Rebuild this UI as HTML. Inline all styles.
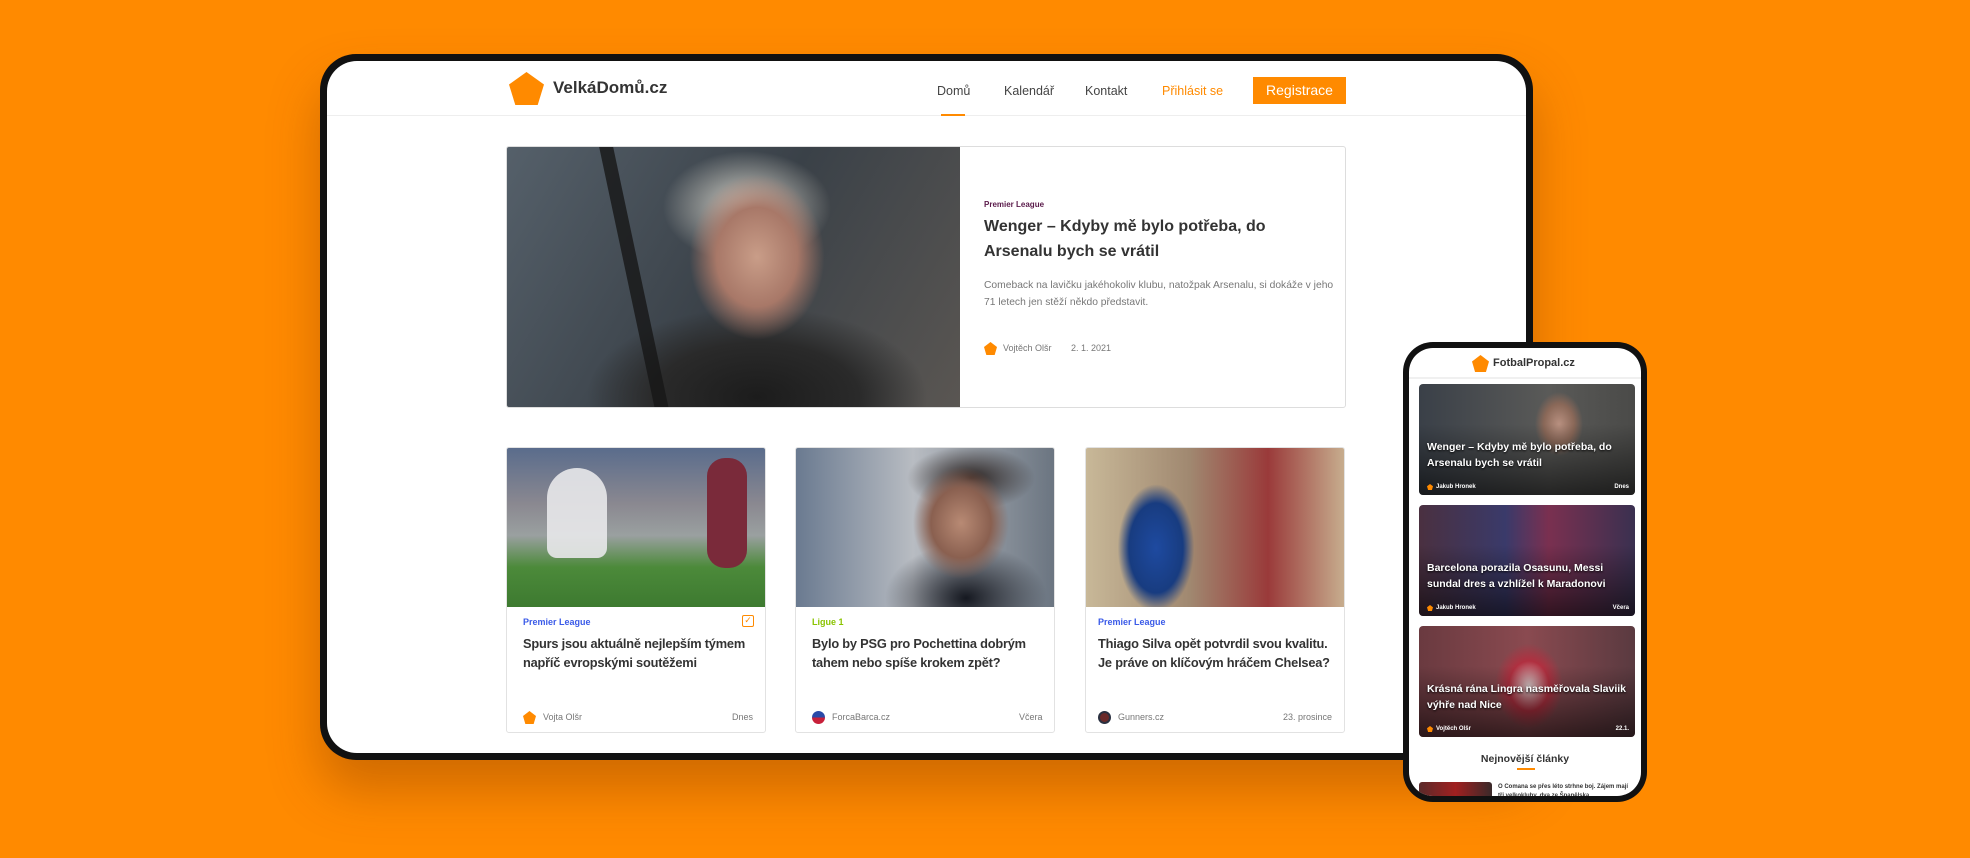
<!DOCTYPE html>
<html><head><meta charset="utf-8"><style>
*{margin:0;padding:0;box-sizing:border-box}
body{width:1970px;height:858px;background:#ff8a00;position:relative;overflow:hidden;font-family:"Liberation Sans",sans-serif;color:#333}
.abs{position:absolute}
.tablet{left:320px;top:54px;width:1213px;height:706px;background:#111;border-radius:36px;box-shadow:0 30px 50px rgba(120,50,0,.35)}
.tscreen{left:327px;top:61px;width:1199px;height:692px;background:#fff;border-radius:30px;overflow:hidden}
.hdr{left:0;top:0;width:1199px;height:55px;border-bottom:1px solid #eee}
.nav{font-size:12.5px;color:#444;top:23px}
.pent{clip-path:polygon(50% 0,100% 38%,82% 100%,18% 100%,0 38%);background:#ff8a00}
.card{background:#fff;border:1px solid #e2e2e2;border-radius:3px;overflow:hidden}
.cat{font-size:9px;font-weight:bold}
.ttl{font-size:12.8px;font-weight:bold;color:#333;line-height:19px;letter-spacing:-.2px}
.meta{font-size:10px;color:#777}
.phone{left:1403px;top:342px;width:244px;height:460px;background:#111;border-radius:30px}
.pscreen{left:1409px;top:348px;width:232px;height:448px;background:#fff;border-radius:24px;overflow:hidden}
.pc{left:10px;width:216px;height:111px;border-radius:4px;overflow:hidden}
.pt{left:8px;font-size:10.5px;font-weight:bold;color:#fff;line-height:16px;text-shadow:0 1px 2px #000}
.pm{font-size:6px;color:#fff;font-weight:bold}
</style></head><body>
<div class="abs tablet"></div>
<div class="abs tscreen">
 <div class="abs hdr">
  <div class="abs pent" style="left:182px;top:11px;width:35px;height:33px"></div>
  <div class="abs" style="left:226px;top:17px;font-size:17px;font-weight:bold;color:#333">VelkáDomů.cz</div>
  <div class="abs nav" style="left:610px">Domů</div>
  <div class="abs" style="left:614px;top:53px;width:24px;height:2px;background:#ff8a00"></div>
  <div class="abs nav" style="left:677px">Kalendář</div>
  <div class="abs nav" style="left:758px">Kontakt</div>
  <div class="abs nav" style="left:835px;color:#ff8a00">Přihlásit se</div>
  <div class="abs" style="left:926px;top:16px;width:93px;height:27px;background:#ff8a00;color:#fff;font-size:14px;text-align:center;line-height:27px">Registrace</div>
 </div>
 <div class="abs card" style="left:179px;top:85px;width:840px;height:262px;border-color:#ddd">
  <div class="abs" style="left:0;top:0;width:453px;height:262px;background:radial-gradient(ellipse 90px 110px at 250px 110px,#c99d88 0,#a87868 45%,transparent 75%),radial-gradient(ellipse 120px 80px at 240px 60px,#d8d6cc 0,transparent 70%),radial-gradient(ellipse 170px 90px at 250px 250px,#1c1c1c 0,#2a2a2a 60%,transparent 100%),linear-gradient(120deg,#55606a,#3a4148 50%,#5a5652)"></div>
  <div class="abs" style="left:120px;top:0;width:14px;height:262px;background:#161616;transform:skewX(12deg);opacity:.8"></div>
  <div class="abs cat" style="left:477px;top:53px;color:#5a1a4a;font-size:8px">Premier League</div>
  <div class="abs" style="left:477px;top:67px;font-size:16px;font-weight:bold;line-height:25px;color:#333;width:330px">Wenger – Kdyby mě bylo potřeba, do Arsenalu bych se vrátil</div>
  <div class="abs" style="left:477px;top:130px;font-size:10.3px;line-height:17px;color:#777;width:350px">Comeback na lavičku jakéhokoliv klubu, natožpak Arsenalu, si dokáže v jeho 71 letech jen stěží někdo představit.</div>
  <div class="abs pent" style="left:477px;top:195px;width:13px;height:13px"></div>
  <div class="abs meta" style="left:496px;top:196px;font-size:9px">Vojtěch Olšr</div>
  <div class="abs meta" style="left:564px;top:196px;font-size:9px">2. 1. 2021</div>
 </div>
 <div class="abs card" style="left:179px;top:386px;width:260px;height:286px">
  <div class="abs" style="left:0;top:0;width:260px;height:159px;background:linear-gradient(180deg,#5a6c8c 0,#8a8890 35%,#9aa0a0 55%,#4c8a3a 75%,#3d7a30 100%)"></div>
  <div class="abs" style="left:40px;top:20px;width:60px;height:90px;background:#e8e8ea;border-radius:30px 30px 10px 10px;opacity:.9"></div>
  <div class="abs" style="left:200px;top:10px;width:40px;height:110px;background:#7a2a3a;border-radius:18px"></div>
  <div class="abs cat" style="left:16px;top:169px;color:#3a5ae8">Premier League</div>
  <div class="abs" style="left:235px;top:167px;width:12px;height:12px;border:1.5px solid #ff8a00;border-radius:2px;color:#ff8a00;font-size:9px;line-height:9px;text-align:center">✓</div>
  <div class="abs ttl" style="left:16px;top:186px;width:236px">Spurs jsou aktuálně nejlepším týmem napříč evropskými soutěžemi</div>
  <div class="abs pent" style="left:16px;top:263px;width:13px;height:13px"></div>
  <div class="abs meta" style="left:36px;top:264px;font-size:9px">Vojta Olšr</div>
  <div class="abs meta" style="left:225px;top:264px;font-size:9px">Dnes</div>
 </div>
 <div class="abs card" style="left:468px;top:386px;width:260px;height:286px">
  <div class="abs" style="left:0;top:0;width:260px;height:159px;background:radial-gradient(ellipse 60px 70px at 165px 75px,#b88a74 0,#8a6050 50%,transparent 80%),radial-gradient(ellipse 80px 40px at 175px 30px,#2a2220 0,transparent 80%),radial-gradient(ellipse 90px 60px at 170px 150px,#151820 0,transparent 90%),linear-gradient(90deg,#6a7a90,#b8bcc2 45%,#6a7480)"></div>
  <div class="abs cat" style="left:16px;top:169px;color:#8ac400">Ligue 1</div>
  <div class="abs ttl" style="left:16px;top:186px;width:238px">Bylo by PSG pro Pochettina dobrým tahem nebo spíše krokem zpět?</div>
  <div class="abs" style="left:16px;top:263px;width:13px;height:13px;border-radius:50%;background:linear-gradient(#2a4aa8 50%,#c8203a 50%)"></div>
  <div class="abs meta" style="left:36px;top:264px;font-size:9px">ForcaBarca.cz</div>
  <div class="abs meta" style="left:223px;top:264px;font-size:9px">Včera</div>
 </div>
 <div class="abs card" style="left:758px;top:386px;width:260px;height:286px">
  <div class="abs" style="left:0;top:0;width:260px;height:159px;background:radial-gradient(ellipse 45px 75px at 70px 100px,#1e4aa0 0,#183c80 60%,transparent 85%),linear-gradient(90deg,#c8b898,#a08870 40%,#9a3a3a 70%,#c8b090)"></div>
  <div class="abs cat" style="left:12px;top:169px;color:#3a5ae8">Premier League</div>
  <div class="abs ttl" style="left:12px;top:186px;width:244px">Thiago Silva opět potvrdil svou kvalitu. Je práve on klíčovým hráčem Chelsea?</div>
  <div class="abs" style="left:12px;top:263px;width:13px;height:13px;border-radius:50%;background:#6a2a2a;border:2px solid #2a3040"></div>
  <div class="abs meta" style="left:32px;top:264px;font-size:9px">Gunners.cz</div>
  <div class="abs meta" style="left:197px;top:264px;font-size:9px">23. prosince</div>
 </div>
</div>
<div class="abs phone"></div>
<div class="abs pscreen">
 <div class="abs" style="left:0;top:0;width:232px;height:31px;border-bottom:2px solid #f0f0f0"></div>
 <div class="abs pent" style="left:63px;top:7px;width:17px;height:17px"></div>
 <div class="abs" style="left:84px;top:9px;font-size:11px;font-weight:bold;color:#333">FotbalPropal.cz</div>
 <div class="abs pc" style="top:36px;background:radial-gradient(ellipse 30px 40px at 140px 40px,#b89080 0,#8a6858 50%,transparent 80%),linear-gradient(90deg,#3a4048,#5a5a58 60%,#4a4a48)">
  <div class="abs" style="left:0;top:40px;width:216px;height:71px;background:linear-gradient(transparent,rgba(0,0,0,.6))"></div>
  <div class="abs pt" style="top:55px">Wenger – Kdyby mě bylo potřeba, do Arsenalu bych se vrátil</div>
  <div class="abs pent" style="left:8px;top:100px;width:6px;height:6px"></div>
  <div class="abs pm" style="left:17px;top:100px">Jakub Hronek</div>
  <div class="abs pm" style="right:6px;top:100px">Dnes</div>
 </div>
 <div class="abs pc" style="top:157px;background:linear-gradient(90deg,#4a3040,#3a3a6a 40%,#7a3050 60%,#3a3050)">
  <div class="abs" style="left:0;top:40px;width:216px;height:71px;background:linear-gradient(transparent,rgba(0,0,0,.6))"></div>
  <div class="abs pt" style="top:55px">Barcelona porazila Osasunu, Messi sundal dres a vzhlížel k Maradonovi</div>
  <div class="abs pent" style="left:8px;top:100px;width:6px;height:6px"></div>
  <div class="abs pm" style="left:17px;top:100px">Jakub Hronek</div>
  <div class="abs pm" style="right:6px;top:100px">Včera</div>
 </div>
 <div class="abs pc" style="top:278px;background:radial-gradient(ellipse 40px 50px at 110px 60px,#d8c8c8 0,#b03040 50%,transparent 85%),linear-gradient(90deg,#6a3a40,#8a4a50 50%,#5a3a40)">
  <div class="abs" style="left:0;top:40px;width:216px;height:71px;background:linear-gradient(transparent,rgba(0,0,0,.6))"></div>
  <div class="abs pt" style="top:55px">Krásná rána Lingra nasměřovala Slaviik výhře nad Nice</div>
  <div class="abs pent" style="left:8px;top:100px;width:6px;height:6px"></div>
  <div class="abs pm" style="left:17px;top:100px">Vojtěch Olšr</div>
  <div class="abs pm" style="right:6px;top:100px">22.1.</div>
 </div>
 <div class="abs" style="left:0;top:405px;width:232px;text-align:center;font-size:10.5px;font-weight:bold;color:#333">Nejnovější články</div>
 <div class="abs" style="left:108px;top:420px;width:18px;height:2px;background:#ff8a00"></div>
 <div class="abs" style="left:10px;top:434px;width:73px;height:20px;background:linear-gradient(90deg,#5a2a2a,#a02020,#3a2a2a);border-radius:3px"></div>
 <div class="abs" style="left:89px;top:435px;width:135px;font-size:6px;font-weight:bold;color:#333;line-height:9px">O Comana se přes léto strhne boj. Zájem mají tři velkokluby, dva ze Španělska</div>
</div>
</body></html>
